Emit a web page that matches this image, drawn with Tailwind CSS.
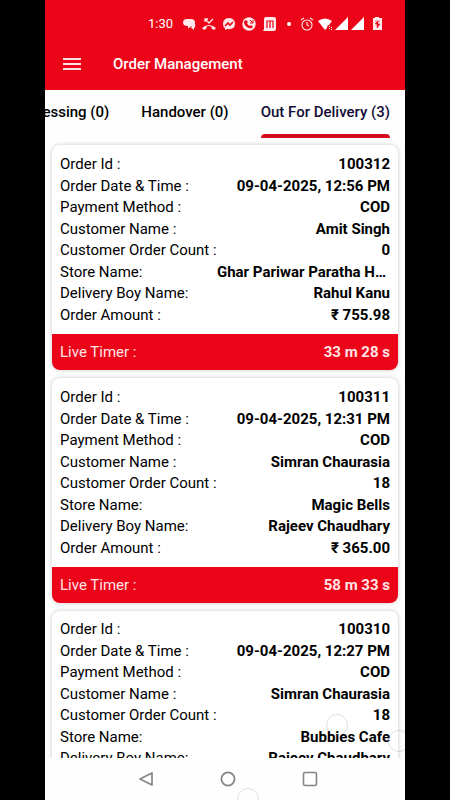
<!DOCTYPE html>
<html lang="en">
  <head>
    <meta charset="UTF-8" />
    <meta name="viewport" content="width=device-width, initial-scale=1.0" />
    <title>Order Management</title>
    <script src="https://cdn.jsdelivr.net/npm/@tailwindcss/browser@4"></script>
  </head>
  <body class="bg-black px-[10%] font-['Roboto',sans-serif] text-black">
    <div class="relative flex h-screen flex-col overflow-hidden bg-[#fefefe]">
      <header class="bg-[#ec0519] text-white">
        <!-- Status bar -->
        <div class="flex h-12 items-center justify-end pr-5">
          <span class="mr-2 text-[13px]">1:30</span>
          <div class="flex items-center gap-1">
            <svg class="h-4 w-4" viewBox="0 0 16 16" fill="#ffe9ea">
              <path d="M6 3h4q4 0 4 3.500t-3 3.500L7 12.500V10Q2 10 2 6.500T6 3z" />
              <path d="M13 7q2 1 1 4l-1 1v2l-3-2.500z" />
            </svg>
            <svg class="h-4 w-4" viewBox="0 0 16 16" fill="none" stroke="#ffe9ea" stroke-width="1.3">
              <path d="M4 6V3h3M4 3l4 4 4-4" />
              <path d="M1 12q7-6 14 0l-2 2-2.500-1.500v-2q-2.500-1-5 0v2L3 14z" fill="#ffe9ea" stroke="none" />
            </svg>
            <svg class="h-4 w-4" viewBox="0 0 16 16">
              <path d="M8 2C4 2 2 5 2 8q0 3 2 4v2l2-1q8 1 8-5c0-3-2-6-6-6z" fill="#ffe9ea" />
              <path d="M4 10l3-3 2 2 3-3" fill="none" stroke="#ec0519" stroke-width="1.6" />
            </svg>
            <svg class="h-4 w-4" viewBox="0 0 16 16">
              <circle cx="8" cy="8" r="6.7" fill="#ffe9ea" />
              <path d="M5 4l2 2-1 1q1 3 3 3l1-1 2 2q-2 2-4 1-5-2-5-6 0-1 2-2z" fill="#ec0519" />
              <path d="M9 4l3 3M12 4v3H9" fill="none" stroke="#ec0519" />
            </svg>
            <svg class="h-4 w-4" viewBox="0 0 16 16">
              <path d="M5 1h8q2 0 2 2v10q0 2-2 2H1q2 0 2-3V3q0-2 2-2z" fill="#ffe9ea" />
              <path d="M6 12V5h6v7M9 5v7" fill="none" stroke="#ec0519" stroke-width="1.2" />
            </svg>
            <span class="ml-1.5 h-1 w-1 rounded-full bg-white"></span>
            <svg class="ml-1 h-4 w-4" viewBox="0 0 16 16" fill="none" stroke="#ffe9ea" stroke-width="1.1">
              <circle cx="8" cy="9" r="5" />
              <path d="M8 6v3l2 1M2 4l3-2M14 4l-3-2" />
            </svg>
            <svg class="-ml-0.5 h-4 w-4" viewBox="0 0 16 16" fill="#ffffff">
              <path d="M1 5q7-5 14 0l-3 4q-2 0-2 3l-2 2z" />
              <path d="M12 10h1v1h-1zM12 12h1v1h-1zM14 11h1v1h-1zM14 13h1v1h-1z" />
            </svg>
            <svg class="-ml-1 h-4 w-4" viewBox="0 0 16 16" fill="#ffffff"><path d="M15 1v13H2z" /></svg>
            <svg class="-ml-1 h-4 w-4" viewBox="0 0 16 16" fill="#ffffff"><path d="M15 1v13H2z" /></svg>
            <svg class="h-4 w-4" viewBox="0 0 16 16">
              <path d="M6 1h4v1h3v12H4V2h2z" fill="#ffe9ea" />
              <path d="M9 5L6 8h2v4l3-4H9zM6 5h5" fill="#ec0519" stroke="#ec0519" stroke-width=".5" />
            </svg>
          </div>
        </div>
        <!-- App bar -->
        <div class="flex h-[42px] items-start gap-8 pl-[18px]">
          <button type="button" aria-label="Open menu" class="mt-2">
            <svg class="h-4 w-[18px]" viewBox="0 0 18 16" stroke="#ffdcdf" stroke-width="2">
              <path d="M0 3h18M0 8h18M0 13h18" />
            </svg>
          </button>
          <h1 class="mt-1 text-[15px] leading-6 font-medium">Order Management</h1>
        </div>
      </header>

      <!-- Tabs -->
      <nav class="flex h-12 shrink-0 justify-end gap-8 overflow-hidden pr-[15px] text-[15px] font-medium whitespace-nowrap">
        <button type="button" class="h-11">Processing (0)</button>
        <button type="button" class="h-11">Handover (0)</button>
        <button type="button" class="relative h-11 text-[#120c35]">
          Out For Delivery (3)
          <span class="absolute inset-x-0 top-11 h-1 rounded-t-full bg-[#d50a1b]"></span>
        </button>
      </nav>

      <!-- Orders -->
      <main class="flex min-h-0 flex-1 flex-col gap-2 overflow-hidden px-[7px] pt-[7px] text-[15px]">
        <article class="shrink-0 overflow-hidden rounded-lg bg-white shadow-[0_0_4px_rgba(0,0,0,0.22)]">
          <dl class="grid h-[189px] auto-rows-fr px-2 pt-[9px] pb-2 leading-[21px]">
            <div class="flex justify-between"><dt>Order Id :</dt><dd class="font-bold">100312</dd></div>
            <div class="flex justify-between"><dt>Order Date &amp; Time :</dt><dd class="font-bold">09-04-2025, 12:56 PM</dd></div>
            <div class="flex justify-between"><dt>Payment Method :</dt><dd class="font-bold">COD</dd></div>
            <div class="flex justify-between"><dt>Customer Name :</dt><dd class="font-bold">Amit Singh</dd></div>
            <div class="flex justify-between"><dt>Customer Order Count :</dt><dd class="font-bold">0</dd></div>
            <div class="flex justify-between"><dt>Store Name:</dt><dd class="pr-1 font-bold">Ghar Pariwar Paratha H…</dd></div>
            <div class="flex justify-between"><dt>Delivery Boy Name:</dt><dd class="font-bold">Rahul Kanu</dd></div>
            <div class="flex justify-between"><dt>Order Amount :</dt><dd class="font-bold">₹ 755.98</dd></div>
          </dl>
          <div class="flex h-9 items-center justify-between bg-[#ec0519] px-2 text-[#ffe4e6]">
            <span>Live Timer :</span><span class="font-bold">33 m 28 s</span>
          </div>
        </article>

        <article class="shrink-0 overflow-hidden rounded-lg bg-white shadow-[0_0_4px_rgba(0,0,0,0.22)]">
          <dl class="grid h-[189px] auto-rows-fr px-2 pt-[9px] pb-2 leading-[21px]">
            <div class="flex justify-between"><dt>Order Id :</dt><dd class="font-bold">100311</dd></div>
            <div class="flex justify-between"><dt>Order Date &amp; Time :</dt><dd class="font-bold">09-04-2025, 12:31 PM</dd></div>
            <div class="flex justify-between"><dt>Payment Method :</dt><dd class="font-bold">COD</dd></div>
            <div class="flex justify-between"><dt>Customer Name :</dt><dd class="font-bold">Simran Chaurasia</dd></div>
            <div class="flex justify-between"><dt>Customer Order Count :</dt><dd class="font-bold">18</dd></div>
            <div class="flex justify-between"><dt>Store Name:</dt><dd class="font-bold">Magic Bells</dd></div>
            <div class="flex justify-between"><dt>Delivery Boy Name:</dt><dd class="font-bold">Rajeev Chaudhary</dd></div>
            <div class="flex justify-between"><dt>Order Amount :</dt><dd class="font-bold">₹ 365.00</dd></div>
          </dl>
          <div class="flex h-9 items-center justify-between bg-[#ec0519] px-2 text-[#ffe4e6]">
            <span>Live Timer :</span><span class="font-bold">58 m 33 s</span>
          </div>
        </article>

        <!-- Continues below the fold -->
        <article class="shrink-0 overflow-hidden rounded-lg bg-white shadow-[0_0_4px_rgba(0,0,0,0.22)]">
          <dl class="grid h-[189px] grid-rows-8 px-2 pt-2 pb-[9px] leading-[21px]">
            <div class="flex justify-between"><dt>Order Id :</dt><dd class="font-bold">100310</dd></div>
            <div class="flex justify-between"><dt>Order Date &amp; Time :</dt><dd class="font-bold">09-04-2025, 12:27 PM</dd></div>
            <div class="flex justify-between"><dt>Payment Method :</dt><dd class="font-bold">COD</dd></div>
            <div class="flex justify-between"><dt>Customer Name :</dt><dd class="font-bold">Simran Chaurasia</dd></div>
            <div class="flex justify-between"><dt>Customer Order Count :</dt><dd class="font-bold">18</dd></div>
            <div class="flex justify-between"><dt>Store Name:</dt><dd class="font-bold">Bubbies Cafe</dd></div>
            <div class="flex justify-between"><dt>Delivery Boy Name:</dt><dd class="font-bold">Rajeev Chaudhary</dd></div>
          </dl>
        </article>
      </main>

      <!-- System navigation -->
      <footer class="flex h-[42px] shrink-0 items-center justify-center gap-[66px] bg-[#fefefe] pl-[5px]">
        <button type="button" aria-label="Back">
          <svg class="h-4 w-4" viewBox="0 0 16 16" fill="none" stroke="#858585" stroke-width="1.7" stroke-linejoin="round"><path d="M14 2v12L2 8z" /></svg>
        </button>
        <button type="button" aria-label="Home">
          <svg class="h-4 w-4" viewBox="0 0 16 16" fill="none" stroke="#858585" stroke-width="1.8"><circle cx="8" cy="8" r="6.6" /></svg>
        </button>
        <button type="button" aria-label="Recent apps">
          <svg class="h-4 w-4" viewBox="0 0 16 16" fill="none" stroke="#858585" stroke-width="1.6"><rect x="1.5" y="1.5" width="13" height="13" rx="1.5" /></svg>
        </button>
      </footer>

      <!-- Touch markers -->
      <span class="pointer-events-none absolute right-[57px] bottom-16 h-[22px] w-[22px] rounded-full border border-[#77779a]/25"></span>
      <span class="pointer-events-none absolute -right-[5px] bottom-12 h-[22px] w-[22px] rounded-full border border-[#77779a]/25"></span>
      <span class="pointer-events-none absolute right-[146px] -bottom-[10px] h-[22px] w-[22px] rounded-full border border-[#77779a]/25"></span>
    </div>
  </body>
</html>
